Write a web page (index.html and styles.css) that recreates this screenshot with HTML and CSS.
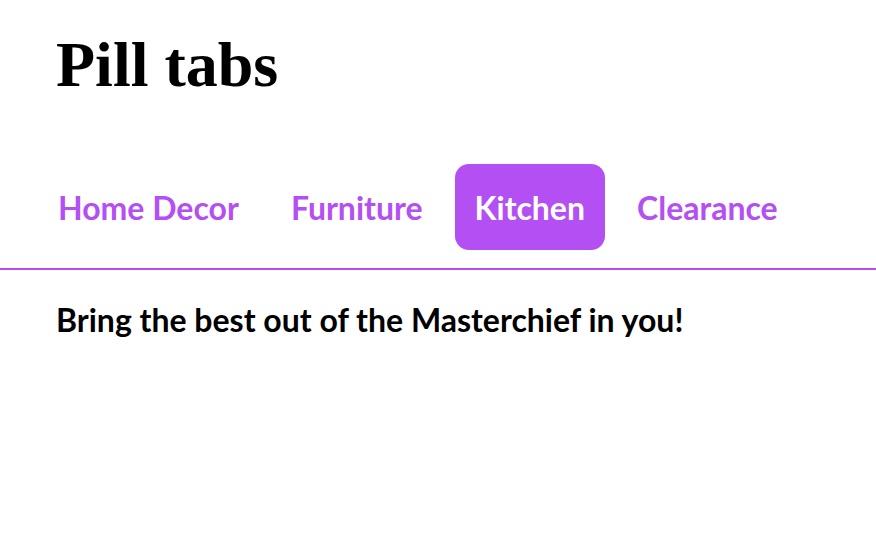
FILE: index.html
```html
<!DOCTYPE html>
<html lang="en">
<head>
<meta charset="utf-8">
<meta name="viewport" content="width=device-width, initial-scale=1">
<title>Pill tabs</title>
<link rel="stylesheet" href="styles.css">
</head>
<body>
<h1 class="title">Pill tabs</h1>
<div class="tabs" role="tablist" aria-label="Departments">
<button class="tab" type="button" role="tab" aria-selected="false">Home Decor</button>
<button class="tab" type="button" role="tab" aria-selected="false">Furniture</button>
<button class="tab" id="tab-kitchen" type="button" role="tab" aria-selected="true" aria-controls="panel-kitchen">Kitchen</button>
<button class="tab" type="button" role="tab" aria-selected="false">Clearance</button>
</div>
<div class="panel" id="panel-kitchen" role="tabpanel" aria-labelledby="tab-kitchen">
<p>Bring the best out of the Masterchief in you!</p>
</div>
</body>
</html>
```
FILE: styles.css
```css
* {
  box-sizing: border-box;
}

body {
  margin: 0;
  background: #fff;
  color: #000;
  font-family: Lato, sans-serif;
}

.title {
  margin: 0;
  padding: 29px 56px 0;
  font: bold 64px/72px "Liberation Serif", serif;
}

.tabs {
  display: flex;
  gap: 12px;
  margin-top: 63px;
  padding: 0 38px 18px;
  border-bottom: 2px solid #b44ff3;
}

.tab {
  padding: 23px 20px 21px;
  border: 0;
  border-radius: 14px;
  background: transparent;
  color: #b44ff3;
  font: bold 32px/42px Lato, sans-serif;
  white-space: nowrap;
}

.tab[aria-selected="true"] {
  background: #b44ff3;
  color: #fff;
}

.panel {
  padding: 29px 56px;
  font-size: 32px;
  font-weight: bold;
  line-height: 42px;
}

.panel p {
  margin: 0;
}
```
